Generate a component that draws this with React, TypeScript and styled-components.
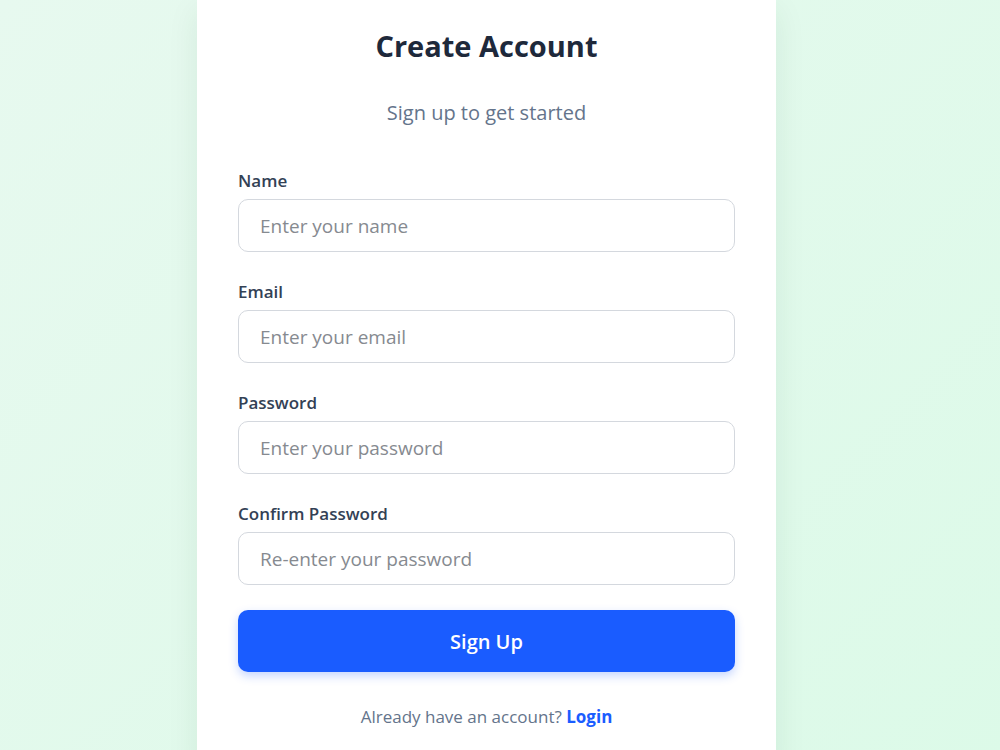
import styled, { createGlobalStyle } from "styled-components";

const GlobalStyle = createGlobalStyle`
  * {
    box-sizing: border-box;
  }
  body {
    margin: 0;
    font-family: "Open Sans", "Noto Sans", sans-serif;
    background: linear-gradient(135deg, #e7f9ef 0%, #dcfae8 100%);
    min-height: 100vh;
  }
`;

const Page = styled.div`
  min-height: 100vh;
  display: flex;
  justify-content: center;
  align-items: flex-start;
  padding-right: 27px;
  overflow: hidden;
`;

const Card = styled.div`
  width: 579px;
  background: #ffffff;
  padding: 28px 41px 40px;
  box-shadow: 0 10px 30px rgba(15, 60, 35, 0.08);
`;

const Title = styled.h1`
  margin: 0;
  text-align: center;
  font-size: 29px;
  line-height: 36px;
  font-weight: 700;
  color: #1e293b;
`;

const Subtitle = styled.p`
  margin: 35px 0 0;
  text-align: center;
  font-size: 20px;
  line-height: 28px;
  color: #64748b;
`;

const Form = styled.form`
  margin-top: 42px;
  display: flex;
  flex-direction: column;
  gap: 28px;
`;

const Field = styled.div`
  display: flex;
  flex-direction: column;
  gap: 6px;
`;

const Label = styled.label`
  font-size: 17px;
  line-height: 24px;
  font-weight: 600;
  color: #334155;
`;

const Input = styled.input`
  height: 53px;
  width: 100%;
  border: 1px solid #d4d8de;
  border-radius: 10px;
  padding: 0 21px;
  font-family: inherit;
  font-size: 19px;
  color: #1e293b;
  background: #fff;
  outline: none;

  &::placeholder {
    color: #868a90;
  }
`;

const SubmitButton = styled.button`
  margin-top: -3px;
  height: 62px;
  width: 100%;
  border: none;
  border-radius: 10px;
  background: #1a5cff;
  color: #ffffff;
  font-family: inherit;
  font-size: 20px;
  font-weight: 600;
  box-shadow: 0 4px 10px rgba(26, 92, 255, 0.25);
  cursor: pointer;
`;

const Footer = styled.p`
  margin: 33px 0 0;
  text-align: center;
  font-size: 17px;
  line-height: 24px;
  color: #64748b;
`;

const LoginLink = styled.a`
  color: #1a5cff;
  font-weight: 700;
  text-decoration: none;
`;

const fields = [
  { id: "name", label: "Name", type: "text", placeholder: "Enter your name" },
  { id: "email", label: "Email", type: "email", placeholder: "Enter your email" },
  { id: "password", label: "Password", type: "password", placeholder: "Enter your password" },
  { id: "confirm", label: "Confirm Password", type: "password", placeholder: "Re-enter your password" },
];

export default function App() {
  return (
    <>
      <GlobalStyle />
      <Page>
        <Card>
          <Title>Create Account</Title>
          <Subtitle>Sign up to get started</Subtitle>
          <Form onSubmit={(e) => e.preventDefault()}>
            {fields.map((f) => (
              <Field key={f.id}>
                <Label htmlFor={f.id}>{f.label}</Label>
                <Input id={f.id} type={f.type} placeholder={f.placeholder} />
              </Field>
            ))}
            <SubmitButton type="submit">Sign Up</SubmitButton>
          </Form>
          <Footer>
            Already have an account? <LoginLink href="#">Login</LoginLink>
          </Footer>
        </Card>
      </Page>
    </>
  );
}
